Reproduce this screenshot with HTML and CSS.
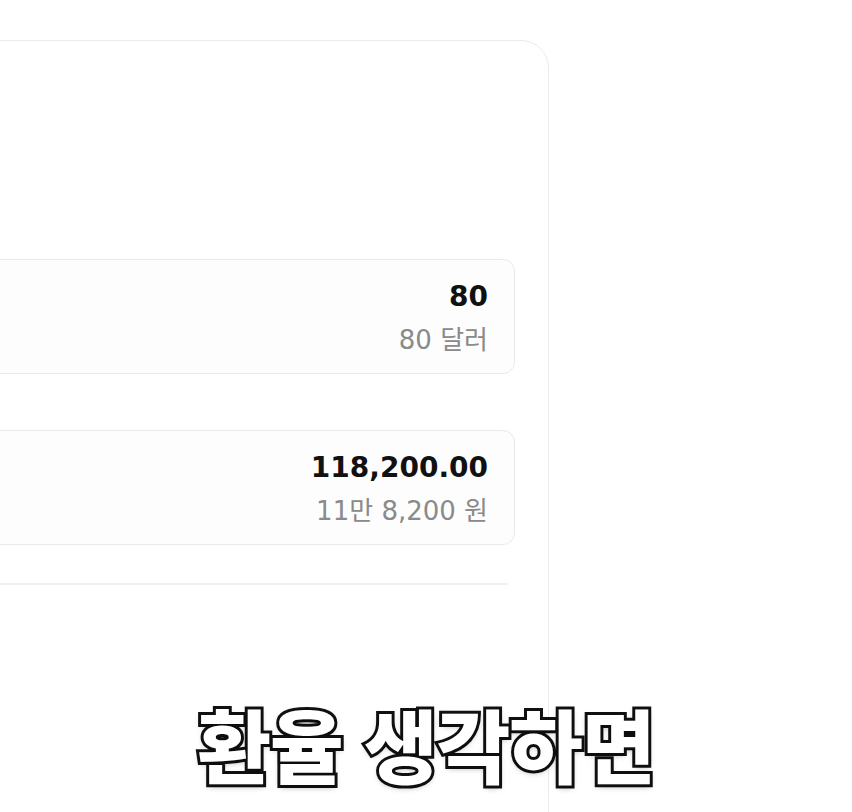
FILE: index.html
```html
<!DOCTYPE html>
<html lang="ko">
<head>
    <meta charset="UTF-8">
    <meta name="viewport" content="width=device-width, initial-scale=1.0">
    <title>환율 계산기</title>
    <link rel="stylesheet" href="styles.css">
</head>
<body>
    <div class="page">
        <section class="card">
            <div class="amount-box">
                <div class="amount">80</div>
                <div class="amount-words">80 달러</div>
            </div>

            <div class="amount-box second">
                <div class="amount">118,200.00</div>
                <div class="amount-words">11만 8,200 원</div>
            </div>

            <hr class="divider">
        </section>

        <div class="caption">환율 생각하면</div>
    </div>
</body>
</html>
```

FILE: styles.css
```css
html, body {
    margin: 0;
    height: 100%;
    overflow: hidden;
    background: #fff;
}
body {
    font-family: "DejaVu Sans", "Noto Sans CJK KR", sans-serif;
    color: #111;
}
.page {
    position: relative;
    height: 100%;
    overflow: hidden;
}
.card {
    box-sizing: border-box;
    width: 849px;
    height: 800px;
    margin: 40px 0 0 -300px;
    padding: 218px 33px 0 0;
    border: 1px solid #ebebeb;
    border-radius: 28px;
}
.amount-box {
    box-sizing: border-box;
    height: 115px;
    padding: 17px 26px 0 0;
    border: 1px solid #e9e9e9;
    border-radius: 12px;
    background: #fdfdfd;
    text-align: right;
}
.amount-box.second {
    margin-top: 56px;
}
.amount {
    font-size: 28px;
    font-weight: bold;
    line-height: 40px;
    color: #111;
}
.amount-words {
    margin-top: 5px;
    font-size: 26px;
    line-height: 36px;
    color: #8a8a8a;
}
.divider {
    margin: 38px 7px 0 0;
    border: none;
    border-top: 2px solid #f0f0f0;
}
.caption {
    position: absolute;
    left: 0;
    right: 0;
    top: 692px;
    text-align: center;
    font-family: "Noto Sans CJK KR", sans-serif;
    font-size: 80px;
    font-weight: 900;
    line-height: 100px;
    letter-spacing: -1px;
    color: #fff;
    -webkit-text-stroke: 6px #111;
    paint-order: stroke fill;
    text-shadow: 0 2px 6px rgba(0, 0, 0, 0.35);
}
```
